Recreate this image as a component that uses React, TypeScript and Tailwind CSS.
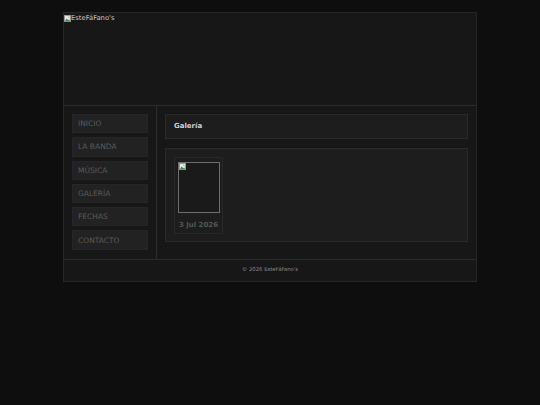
import React from "react";

const NAV = ["Inicio", "La Banda", "Música", "Galería", "Fechas", "Contacto"];

// small stand-in for the browser's broken-image glyph
function BrokenImg({ className = "" }: { className?: string }) {
  return (
    <svg viewBox="0 0 8 8" className={className}>
      <rect x="0.5" y="0.5" width="7" height="7" fill="#e8e8e8" stroke="#9a9a9a" strokeWidth="1" />
      <path d="M1 7 L3 4 L5 6 L6 5 L7 7 Z" fill="#3f8a3a" />
      <circle cx="5.5" cy="2.5" r="0.9" fill="#7fb3e0" />
    </svg>
  );
}

export default function App() {
  return (
    <div
      className="min-h-[405px] w-full bg-[#0e0e0e] pt-[12px]"
      style={{ fontFamily: '"DejaVu Sans", Verdana, sans-serif' }}
    >
      <div className="mx-auto flex w-[414px] flex-col border border-[#262626] bg-[#171717]">
        {/* header / logo */}
        <header className="h-[93px] border-b border-[#2c2c2c]">
          <div className="flex items-center pt-[1px] text-[6.8px] leading-[9px] text-[#c8c8c8]">
            <BrokenImg className="h-[7px] w-[7px]" />
            <span>EsteFáFano's</span>
          </div>
        </header>

        <div className="flex">
          {/* sidebar */}
          <nav className="flex w-[93px] flex-col gap-[4px] border-r border-[#2c2c2c] px-[8px] pt-[8px] pb-[9px]">
            {NAV.map((item) => (
              <a
                key={item}
                className="flex h-[19.3px] w-[76px] items-center bg-[#222222] pl-[6px] text-[7.5px] uppercase text-[#5a5a5a] shadow-[inset_0_0_0_1px_#262626]"
              >
                {item}
              </a>
            ))}
          </nav>

          {/* main */}
          <main className="flex flex-1 flex-col gap-[9px] px-[8px] pt-[8px] pb-[9px]">
            <div className="flex h-[25px] items-center border border-[#2a2a2a] bg-[#1d1d1d] pl-[8px] text-[7px] font-bold text-[#d0d0d0]">
              Galería
            </div>
            <div className="h-[94px] border border-[#2a2a2a] bg-[#1d1d1d] p-[8px]">
              <div className="flex w-[49px] flex-col items-center border border-[#282828] px-[3px] pt-[4px] pb-[2px]">
                <div className="h-[51px] w-[42px] border border-[#6e6e6e] bg-[#1a1a1a]">
                  <BrokenImg className="h-[7px] w-[7px]" />
                </div>
                <div className="mt-[6px] text-[7px] font-bold leading-[12px] text-[#555555]">
                  3 Jul 2026
                </div>
              </div>
            </div>
          </main>
        </div>

        {/* footer */}
        <footer className="flex h-[22px] items-center justify-center border-t border-[#2c2c2c] text-[5.3px] text-[#8a8a8a]">
          © 2026 EsteFáFano's
        </footer>
      </div>
    </div>
  );
}
